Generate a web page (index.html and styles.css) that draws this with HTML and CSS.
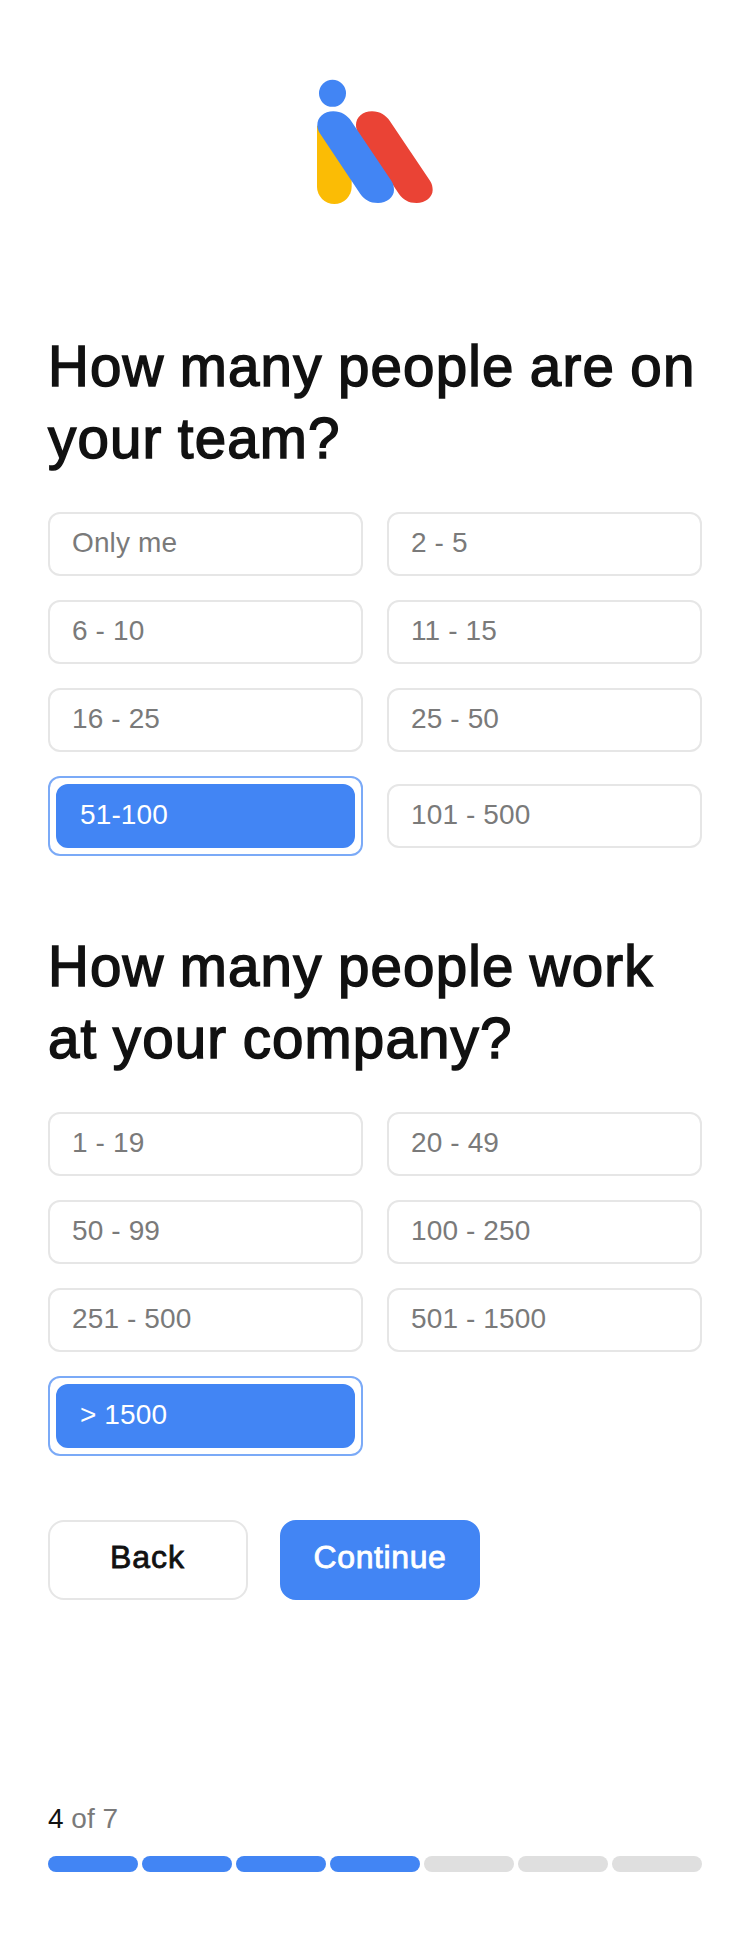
FILE: index.html
```html
<!DOCTYPE html>
<html lang="en">
<head>
<meta charset="utf-8">
<title>Team size</title>
<link rel="stylesheet" href="styles.css">
</head>
<body>
<main class="page">
  <svg class="logo" viewBox="0 0 450 480" aria-label="Logo">
    <path class="logo-yellow" d="M51 195V380a52 52 0 0 0 104 0V340Z"/>
    <path class="logo-red" d="M168 195C168 172 188 154 216 154C240 154 258 166 270 184L390 362C396 371 398 380 398 390C398 412 376 429 350 429C325 429 309 419 297 402L175 219C170 211 168 204 168 195Z"/>
    <path class="logo-blue" d="M52 195C52 172 72 154 100 154C124 154 142 166 154 184L274 362C280 371 282 380 282 390C282 412 260 429 234 429C209 429 193 419 181 402L59 219C54 211 52 204 52 195Z"/>
    <circle class="logo-blue" cx="97.500" cy="100" r="40.500"/>
  </svg>

  <section class="question">
    <h1 class="title">How many people are on<br>your team?</h1>
    <div class="options">
      <button class="option">Only me</button>
      <button class="option">2 - 5</button>
      <button class="option">6 - 10</button>
      <button class="option">11 - 15</button>
      <button class="option">16 - 25</button>
      <button class="option">25 - 50</button>
      <div class="selected"><button class="option option-active">51-100</button></div>
      <button class="option">101 - 500</button>
    </div>
  </section>

  <section class="question">
    <h1 class="title">How many people work<br>at your company?</h1>
    <div class="options">
      <button class="option">1 - 19</button>
      <button class="option">20 - 49</button>
      <button class="option">50 - 99</button>
      <button class="option">100 - 250</button>
      <button class="option">251 - 500</button>
      <button class="option">501 - 1500</button>
      <div class="selected"><button class="option option-active">&gt; 1500</button></div>
    </div>
  </section>

  <div class="actions">
    <button class="button button-back">Back</button>
    <button class="button button-primary">Continue</button>
  </div>

  <footer class="progress">
    <p class="step"><span class="step-current">4</span> of 7</p>
    <div class="bars">
      <span class="bar bar-done"></span>
      <span class="bar bar-done"></span>
      <span class="bar bar-done"></span>
      <span class="bar bar-done"></span>
      <span class="bar"></span>
      <span class="bar"></span>
      <span class="bar"></span>
    </div>
  </footer>
</main>
</body>
</html>
```

FILE: styles.css
```css
* { box-sizing: border-box; }

body {
  margin: 0;
  background: #fff;
  color: #111;
  font-family: "Liberation Sans", Arial, sans-serif;
}

.page {
  display: flex;
  flex-direction: column;
  height: 1952px;
  padding: 60px 48px 80px;
}

.logo {
  align-self: center;
  flex: none;
  width: 150px;
  height: 160px;
  margin-bottom: 110px;
}

.logo-blue { fill: #4285f4; }
.logo-red { fill: #ea4335; }
.logo-yellow { fill: #fbbc05; }

.question { margin-bottom: 74px; }

.title {
  margin: 0 0 37px;
  padding-top: 1px;
  font-size: 56.5px;
  font-weight: 400;
  line-height: 72px;
  letter-spacing: 1.15px;
  word-spacing: -1.5px;
  white-space: nowrap;
  -webkit-text-stroke: 1.5px #111;
}

.options {
  display: grid;
  grid-template-columns: 1fr 1fr;
  gap: 24px;
  align-items: center;
}

.option {
  display: flex;
  align-items: center;
  width: 100%;
  height: 64px;
  padding: 0 22px 3px;
  border: 2px solid #e6e6e6;
  border-radius: 12px;
  background: #fff;
  color: #7a7a7a;
  font: 28px/32px "Liberation Sans", Arial, sans-serif;
  letter-spacing: 0.12px;
}

.selected {
  padding: 6px;
  border: 2px solid #7baaf7;
  border-radius: 12px;
}

.option-active {
  border-color: #4285f4;
  background: #4285f4;
  color: #fff;
}

.actions {
  display: flex;
  gap: 32px;
  margin-top: -10px;
}

.button {
  width: 200px;
  height: 80px;
  padding: 0 0 6px;
  border: 2px solid #e6e6e6;
  border-radius: 16px;
  background: #fff;
  color: #111;
  font: 32px/36px "Liberation Sans", Arial, sans-serif;
  letter-spacing: 0.6px;
  -webkit-text-stroke: 0.8px currentColor;
}

.button-back {
  padding-right: 1px;
  letter-spacing: 1px;
}

.button-primary {
  border-color: #4285f4;
  background: #4285f4;
  color: #fff;
}

.progress { margin-top: auto; }

.step {
  margin: 0 0 19px;
  color: #7a7a7a;
  font-size: 28px;
  line-height: 36px;
}

.step-current { color: #111; }

.bars {
  display: grid;
  grid-template-columns: repeat(7, 1fr);
  gap: 4px;
}

.bar {
  height: 16px;
  border-radius: 8px;
  background: #dfdfdf;
}

.bar-done { background: #4285f4; }
```
